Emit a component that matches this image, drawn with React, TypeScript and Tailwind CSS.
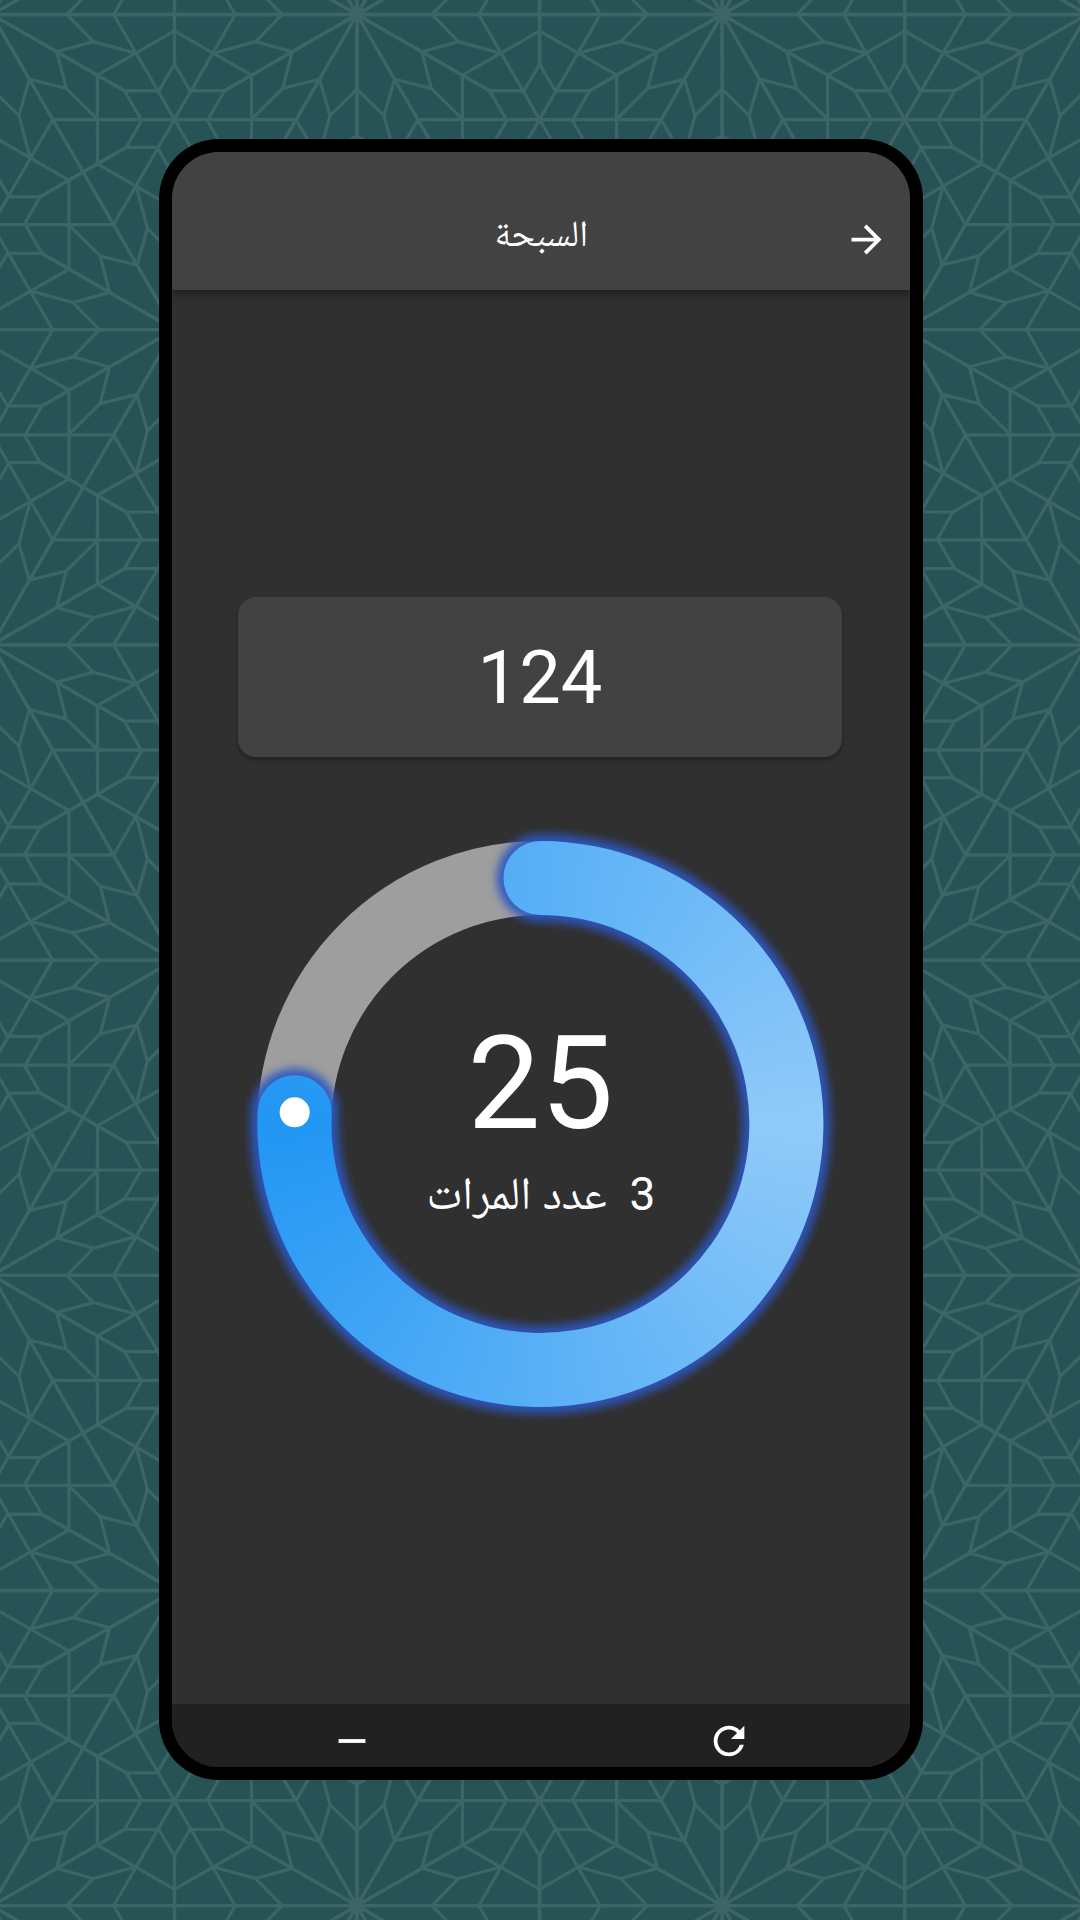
import React from "react";
import { MdArrowForward, MdRefresh, MdRemove } from "react-icons/md";

/* One twelfth of the star rosette; reflections and rotations complete it. */
const WEDGE =
  "M0 0L182.7 0M0 0L132.5 76.5M75 0L101.4 27.3L64.8 37.4M101.4 27.3L143.6 38.8M121.8 0L182.7 105.5M105.4 60.9L182.7 16.4M182.7 0V49.5L167 76.5H132.5";

const TILE = 365.1;
const ROW = 315.2;

function Background() {
  const stars: { x: number; y: number }[] = [];
  for (let r = -1; r <= 7; r++) {
    for (let c = -2; c <= 3; c++) {
      stars.push({ x: 357 + c * TILE + (r % 2 !== 0 ? TILE / 2 : 0), y: 14.5 + r * ROW });
    }
  }
  return (
    <svg className="absolute inset-0" width="1080" height="1920" viewBox="0 0 1080 1920">
      <defs>
        <path id="wedge" d={WEDGE} />
        <g id="star">
          {[0, 60, 120, 180, 240, 300].map((a) => (
            <g key={a} transform={`rotate(${a})`}>
              <use href="#wedge" />
              <use href="#wedge" transform="scale(1 -1)" />
            </g>
          ))}
          <circle r="6.5" fill="#3d6467" />
        </g>
      </defs>
      <g fill="none" stroke="#3d6467" strokeWidth="3.3" strokeLinejoin="round">
        {stars.map((s, i) => (
          <use key={i} href="#star" transform={`translate(${s.x} ${s.y}) scale(1 0.9965)`} />
        ))}
      </g>
    </svg>
  );
}

const CX = 300.4;
const CY = 300;
const R = 246;
const HALF = 37;
const SWEEP = (25 / 33) * 360;

function polar(r: number, deg: number) {
  const t = ((deg - 90) * Math.PI) / 180;
  return `${(CX + r * Math.cos(t)).toFixed(2)} ${(CY + r * Math.sin(t)).toFixed(2)}`;
}

const ARC = `M${polar(R, 0)}A${R} ${R} 0 1 1 ${polar(R, SWEEP)}`;
const OUTLINE =
  `M${polar(R + HALF, 0)}A${R + HALF} ${R + HALF} 0 1 1 ${polar(R + HALF, SWEEP)}` +
  `A${HALF} ${HALF} 0 0 1 ${polar(R - HALF, SWEEP)}` +
  `A${R - HALF} ${R - HALF} 0 1 0 ${polar(R - HALF, 0)}` +
  `A${HALF} ${HALF} 0 0 1 ${polar(R + HALF, 0)}Z`;

function CounterRing() {
  const [hx, hy] = polar(R, SWEEP).split(" ");
  return (
    <div className="relative flex h-[600px] w-[600px] shrink-0 flex-col items-center">
      <svg className="absolute inset-0" width="600" height="600" viewBox="0 0 600 600" fill="none">
        <defs>
          <clipPath id="progress">
            <path d={OUTLINE} />
          </clipPath>
          <filter id="glow" x="0" y="0" width="600" height="600" filterUnits="userSpaceOnUse">
            <feGaussianBlur stdDeviation="4" />
          </filter>
        </defs>
        <circle cx={CX} cy={CY} r={R} stroke="#9e9e9e" strokeWidth={HALF * 2} />
        <path d={ARC} stroke="#2c57c0" strokeOpacity="0.92" strokeWidth="88" strokeLinecap="round" filter="url(#glow)" />
      </svg>
      <div className="absolute inset-0 bg-[conic-gradient(from_90deg,#90caf9,#2196f3_50%,#90caf9)] [clip-path:url(#progress)]" />
      <svg className="absolute inset-0" width="600" height="600" viewBox="0 0 600 600">
        <circle cx={hx} cy={hy} r="15" fill="white" />
      </svg>
      <div className="relative mt-[184px] pl-px text-[130px] leading-[152px]">25</div>
      <div
        dir="rtl"
        className="relative mt-[6px] h-14 whitespace-pre pl-[2px] font-['Roboto','Noto_Naskh_Arabic_UI','Noto_Naskh_Arabic','DejaVu_Sans',sans-serif] text-[46px] leading-[56px]"
      >
        {"3  "}
        <span className="align-[-5px]">عدد المرات</span>
      </div>
    </div>
  );
}

export default function App() {
  return (
    <div className="relative h-[1920px] w-[1080px] overflow-hidden bg-[#275356] pt-[139px] pl-[159px] font-['Roboto',sans-serif] text-white">
      <Background />
      <div className="relative flex h-[1641px] w-[764px] flex-col overflow-hidden rounded-[60px] bg-black p-[13px]">
        <div className="flex h-full w-full flex-col overflow-hidden rounded-[47px] bg-[#303030]">
          <header className="relative grid h-[138px] shrink-0 grid-cols-[1fr_auto_1fr] items-center bg-[#424242] px-[21px] pt-[36px] shadow-[0_3px_8px_rgba(0,0,0,0.45)]">
            <span />
            <h1
              dir="rtl"
              className="pb-[5px] font-['Noto_Naskh_Arabic_UI','Noto_Naskh_Arabic','DejaVu_Sans',sans-serif] text-[37px] leading-[48px]"
            >
              السبحة
            </h1>
            <MdArrowForward className="size-[45px] justify-self-end" />
          </header>
          <main className="flex flex-1 flex-col items-center pt-[307px] pr-[2px]">
            <div className="flex h-[160px] w-[604px] shrink-0 items-center justify-center rounded-[18px] bg-[#424242] text-[74px] leading-[87px] shadow-[0_3px_4px_rgba(0,0,0,0.3)]">
              124
            </div>
            <div className="mt-[67px]">
              <CounterRing />
            </div>
          </main>
          <nav className="flex h-[63px] shrink-0 justify-between bg-[#212121] pt-[14px] pr-[158px] pl-[157px]">
            <MdRemove className="size-[46px]" />
            <MdRefresh className="size-[46px]" />
          </nav>
        </div>
      </div>
    </div>
  );
}
